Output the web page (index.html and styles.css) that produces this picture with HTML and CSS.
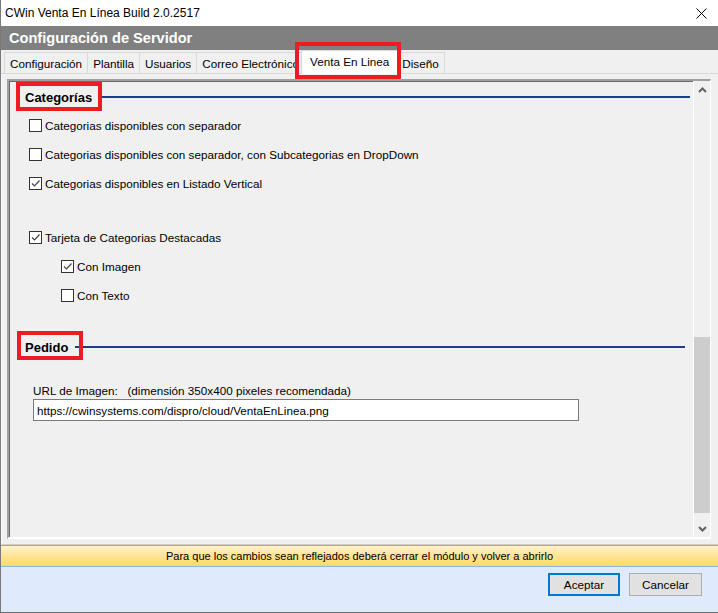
FILE: index.html
```html
<!DOCTYPE html>
<html lang="es">

<head>
    <meta charset="UTF-8">
    <meta name="viewport" content="width=device-width, initial-scale=1.0">
    <title>CWin Venta En Línea</title>
    <link rel="stylesheet" href="styles.css">
</head>

<body>
    <div class="window">
        <div class="titlebar">
            <span>CWin Venta En Línea Build 2.0.2517</span>
            <svg class="close" width="11" height="11" viewBox="0 0 11 11">
                <path d="M0.5 0.5 L10.5 10.5 M10.5 0.5 L0.5 10.5" stroke="#000" stroke-width="1" fill="none" />
            </svg>
        </div>

        <div class="header">Configuración de Servidor</div>

        <div class="tabs">
            <div class="tab">Configuración</div>
            <div class="tab">Plantilla</div>
            <div class="tab">Usuarios</div>
            <div class="tab">Correo Electrónico</div>
            <div class="tab active mark">Venta En Linea</div>
            <div class="tab">Diseño</div>
        </div>

        <div class="page">
            <div class="panel">
                <div class="content">
                    <div class="heading heading-cat">
                        <span class="mark">Categorías</span>
                    </div>

                    <div class="options">
                        <div class="row">
                            <span class="cb"></span>
                            <span>Categorias disponibles con separador</span>
                        </div>
                        <div class="row">
                            <span class="cb"></span>
                            <span>Categorias disponibles con separador, con Subcategorias en DropDown</span>
                        </div>
                        <div class="row">
                            <span class="cb checked"><svg viewBox="0 0 11 11"><path d="M2 5.5 L4.5 8 L9.5 2.5" /></svg></span>
                            <span>Categorias disponibles en Listado Vertical</span>
                        </div>
                    </div>

                    <div class="options options-gap">
                        <div class="row">
                            <span class="cb checked"><svg viewBox="0 0 11 11"><path d="M2 5.5 L4.5 8 L9.5 2.5" /></svg></span>
                            <span>Tarjeta de Categorias Destacadas</span>
                        </div>
                        <div class="row sub">
                            <span class="cb checked"><svg viewBox="0 0 11 11"><path d="M2 5.5 L4.5 8 L9.5 2.5" /></svg></span>
                            <span>Con Imagen</span>
                        </div>
                        <div class="row sub">
                            <span class="cb"></span>
                            <span>Con Texto</span>
                        </div>
                    </div>

                    <div class="heading heading-ped">
                        <span class="mark">Pedido</span>
                    </div>

                    <div class="url-label">URL de Imagen:   (dimensión 350x400 pixeles recomendada)</div>
                    <input class="url" type="text" value="https://cwinsystems.com/dispro/cloud/VentaEnLinea.png">
                </div>

                <div class="scrollbar">
                    <div class="arrow">
                        <svg width="9" height="6" viewBox="0 0 9 6"><path d="M1 5 L4.5 1.5 L8 5" /></svg>
                    </div>
                    <div class="track">
                        <div class="thumb"></div>
                    </div>
                    <div class="arrow">
                        <svg width="9" height="6" viewBox="0 0 9 6"><path d="M1 1 L4.5 4.5 L8 1" /></svg>
                    </div>
                </div>
            </div>
        </div>

        <div class="notice">Para que los cambios sean reflejados deberá cerrar el módulo y volver a abrirlo</div>

        <div class="buttons">
            <div class="btn default">Aceptar</div>
            <div class="btn">Cancelar</div>
        </div>
    </div>
</body>

</html>
```

FILE: styles.css
```css
body {
    margin: 0;
    padding: 0;
}

* {
    box-sizing: border-box;
}

.window {
    width: 718px;
    height: 613px;
    display: flex;
    flex-direction: column;
    background: #f0f0f0;
    border-left: 1px solid #7a7a7a;
    border-bottom: 1px solid #6d6d6d;
    font-family: "Liberation Sans", Arial, sans-serif;
    font-size: 11.7px;
    color: #000;
}

.titlebar {
    height: 26px;
    flex: none;
    display: flex;
    align-items: center;
    justify-content: space-between;
    padding: 0 11px 0 4px;
    background: #fff;
    font-size: 12px;
}

.close {
    display: block;
}

.header {
    height: 24px;
    flex: none;
    display: flex;
    align-items: center;
    padding-left: 8px;
    background: #808080;
    color: #fff;
    font-size: 14.6px;
    font-weight: bold;
}

.tabs {
    height: 24px;
    flex: none;
    display: flex;
    align-items: flex-end;
    padding-left: 3px;
    border-bottom: 1px solid #d9d9d9;
}

.tab {
    height: 22px;
    display: flex;
    align-items: center;
    padding: 0 5px;
    margin-right: -1px;
    margin-bottom: -1px;
    border: 1px solid #d9d9d9;
    background: #f0f0f0;
}

.tab.active {
    height: 24px;
    padding: 0 8px 2px;
    margin-left: -3px;
    margin-right: -2px;
    border-bottom: 0;
    background: #fff;
    position: relative;
    z-index: 1;
}

.mark {
    position: relative;
}

.mark::after {
    content: "";
    position: absolute;
    border: 4px solid #ed1c24;
    z-index: 3;
}

.tab.mark::after {
    top: -9px;
    left: -7px;
    right: -4px;
    bottom: -5px;
}

.page {
    flex: 1;
    padding: 5px 7px 5px 5px;
    border-left: 1px solid #fcfcfc;
    border-bottom: 1px solid #cfcfcf;
}

.panel {
    height: 100%;
    display: flex;
    border-style: solid;
    border-width: 2px 1px 2px 2px;
    border-color: #a0a0a0 #fff #fff #a0a0a0;
    box-shadow: inset 1px 1px 0 #696969;
}

.content {
    flex: 1;
    padding: 6px 0 0 16px;
}

.heading {
    height: 20px;
    display: flex;
    align-items: center;
    font-size: 13px;
    font-weight: bold;
}

.heading::after {
    content: "";
    flex: 1;
    height: 2px;
    margin-left: 7px;
    background: #1d3e8a;
}

.heading-cat {
    margin-right: 3px;
}

.heading-cat .mark::after {
    top: -8px;
    left: -9px;
    right: -10px;
    bottom: -6px;
}

.heading-ped {
    margin-top: 27px;
    margin-right: 8px;
}

.heading-ped .mark::after {
    top: -9px;
    left: -8px;
    right: -15px;
    bottom: -5px;
}

.options {
    margin-top: 4px;
}

.options-gap {
    margin-top: 25px;
}

.row {
    height: 29px;
    display: flex;
    align-items: center;
    padding-left: 4px;
}

.row.sub {
    padding-left: 36px;
}

.cb {
    width: 13px;
    height: 13px;
    flex: none;
    margin-right: 3px;
    border: 1px solid #333;
    background: #fff;
}

.cb svg {
    display: block;
    width: 11px;
    height: 11px;
    fill: none;
    stroke: #444;
    stroke-width: 1.2;
}

.url-label {
    margin: 27px 0 1px 8px;
    line-height: 14px;
    white-space: pre;
}

.url {
    display: block;
    width: 546px;
    height: 22px;
    margin: 0 0 0 8px;
    padding: 0 3px;
    border: 1px solid #7a7a7a;
    background: #fff;
    font-family: inherit;
    font-size: 11.7px;
    color: #000;
    outline: none;
}

.scrollbar {
    width: 17px;
    flex: none;
    display: flex;
    flex-direction: column;
    border-left: 1px solid #fff;
    background: #f0f0f0;
}

.arrow {
    height: 17px;
    display: flex;
    align-items: center;
    justify-content: center;
}

.arrow svg {
    fill: none;
    stroke: #606060;
    stroke-width: 2;
}

.track {
    flex: 1;
}

.thumb {
    height: 176px;
    margin-top: 239px;
    background: #cdcdcd;
}

.notice {
    height: 22px;
    flex: none;
    line-height: 20px;
    text-align: center;
    border-top: 1px solid #b9a77b;
    border-bottom: 1px solid #92b6e0;
    background: linear-gradient(#fff3cf, #ffe59a 45%, #ffd966);
    font-size: 11px;
}

.buttons {
    height: 45px;
    flex: none;
    display: flex;
    justify-content: flex-end;
    align-items: flex-start;
    gap: 9px;
    padding: 6px 16px 0 0;
    background: #dfeafc;
}

.btn {
    width: 73px;
    height: 23px;
    display: flex;
    align-items: center;
    justify-content: center;
    border: 1px solid #adadad;
    background: #e1e1e1;
}

.btn.default {
    width: 72px;
    border: 2px solid #0078d7;
}
```
